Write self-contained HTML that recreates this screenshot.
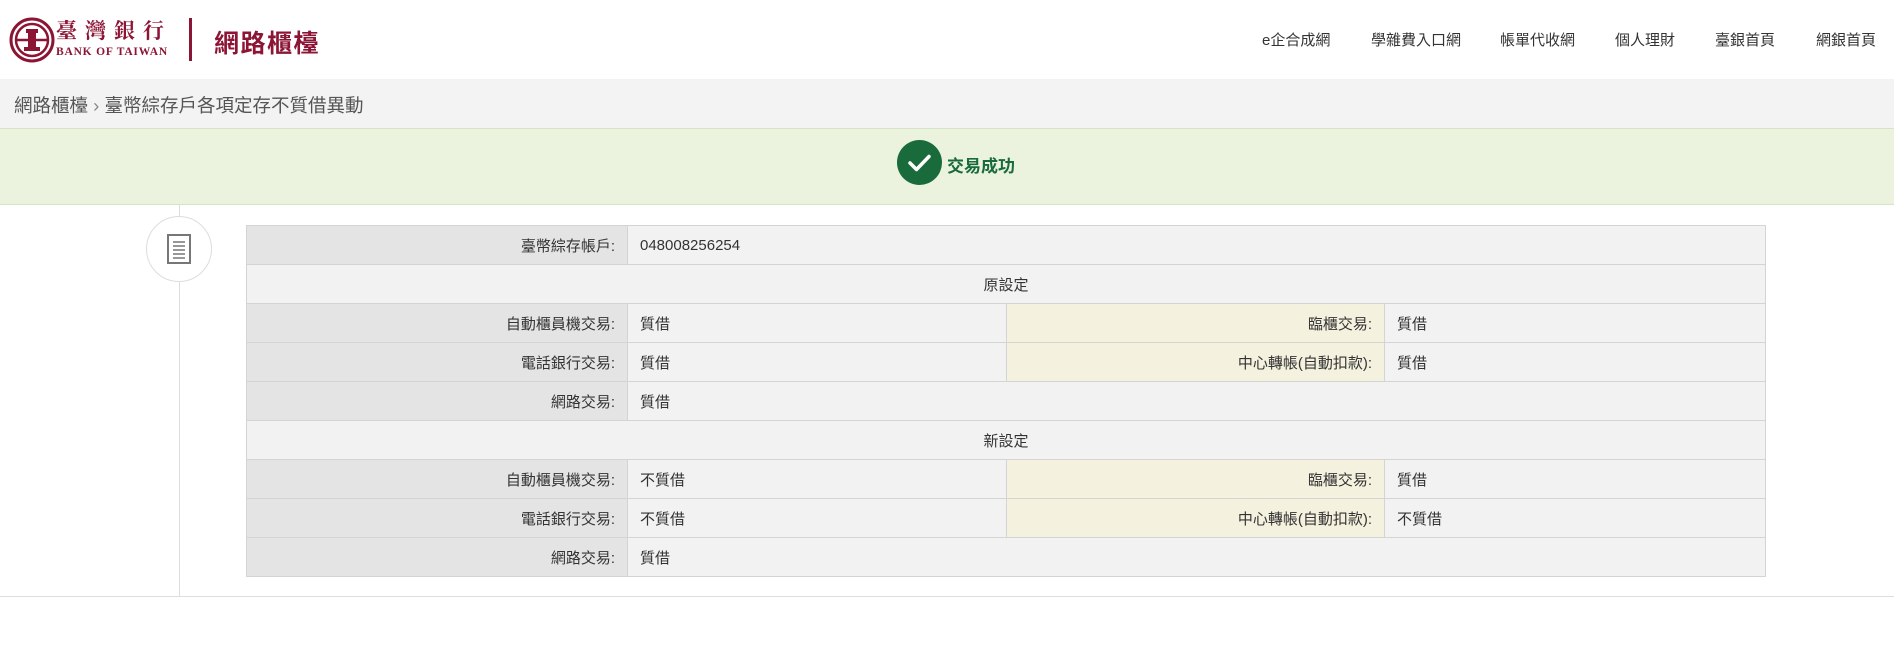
<!DOCTYPE html>
<html><head><meta charset="utf-8"><style>
*{margin:0;padding:0;box-sizing:border-box}
body{width:1894px;height:668px;background:#fff;font-family:"Liberation Sans","Noto Sans CJK TC",sans-serif;color:#333;position:relative;overflow:hidden}
.abs{position:absolute}
.nav{top:29px;font-size:15px;color:#333;white-space:nowrap}
table{position:absolute;left:246px;top:225px;width:1519px;border-collapse:collapse;font-size:15px;table-layout:fixed}
td{height:39px;border:1px solid #d4d4d4;padding:0 12px;background:#f2f2f2}
td.l{background:#e4e4e4;text-align:right}
td.l2{background:#f4f1df;text-align:right}
td.h{text-align:center}
</style></head><body>
<svg class="abs" style="left:9px;top:17px" width="48" height="48" viewBox="0 0 48 48">
<circle cx="23" cy="23" r="21" fill="none" stroke="#8c1535" stroke-width="3"/>
<circle cx="23" cy="23" r="16" fill="none" stroke="#8c1535" stroke-width="2.5"/>
<path d="M7 23h32" stroke="#8c1535" stroke-width="2.5"/>
<path d="M17 12h12v4h-2v14h4v4H15v-4h4V16h-2z" fill="#8c1535"/>
</svg>
<div class="abs" style="left:56px;top:15px;font-family:'Noto Serif CJK SC',serif;font-size:21px;letter-spacing:8px;color:#8c1535;font-weight:bold">臺灣銀行</div>
<div class="abs" style="left:56px;top:46px;font-family:'Liberation Serif',serif;font-size:11.5px;font-weight:bold;color:#8c1535;letter-spacing:0.8px">BANK OF TAIWAN</div>
<div class="abs" style="left:189px;top:18px;width:3px;height:43px;background:#8c1535"></div>
<div class="abs" style="left:214px;top:24px;font-size:25px;font-weight:bold;color:#8c1535;letter-spacing:1.5px">網路櫃檯</div>
<div class="abs nav" style="left:1262px">e企合成網</div>
<div class="abs nav" style="left:1371px">學雜費入口網</div>
<div class="abs nav" style="left:1500px">帳單代收網</div>
<div class="abs nav" style="left:1615px">個人理財</div>
<div class="abs nav" style="left:1715px">臺銀首頁</div>
<div class="abs nav" style="left:1816px">網銀首頁</div>
<div class="abs" style="left:0;top:79px;width:1894px;height:49px;background:#f3f3f3"></div>
<div class="abs" style="left:14px;top:92px;font-size:18.5px;color:#555">網路櫃檯 <span style="color:#888">›</span> 臺幣綜存戶各項定存不質借異動</div>
<div class="abs" style="left:0;top:128px;width:1894px;height:77px;background:#ebf3df;border-top:1px solid #d6e4c6;border-bottom:1px solid #d6e4c6"></div>
<svg class="abs" style="left:897px;top:140px" width="45" height="45" viewBox="0 0 45 45"><circle cx="22.5" cy="22.5" r="22.5" fill="#1a6b3c"/><path d="M13 23l6.5 6.5L32 16.5" fill="none" stroke="#fff" stroke-width="3.5" stroke-linecap="round" stroke-linejoin="round"/></svg>
<div class="abs" style="left:947px;top:152px;font-size:17px;font-weight:bold;color:#1a6b3c">交易成功</div>
<div class="abs" style="left:179px;top:205px;width:1px;height:392px;background:#ddd"></div>
<div class="abs" style="left:0;top:596px;width:1894px;height:1px;background:#ddd"></div>
<div class="abs" style="left:146px;top:216px;width:66px;height:66px;border:1px solid #ddd;border-radius:50%;background:#fff"></div>
<svg class="abs" style="left:167px;top:234px" width="24" height="30" viewBox="0 0 24 30"><rect x="1" y="1" width="22" height="28" fill="#fff" stroke="#777" stroke-width="2"/><path d="M6 8h12M6 12h12M6 16h12M6 20h12M6 24h12" stroke="#777" stroke-width="1.5"/></svg>
<table>
<colgroup><col style="width:381px"><col style="width:379px"><col style="width:378px"><col style="width:381px"></colgroup>
<tr><td class="l">臺幣綜存帳戶:</td><td colspan="3">048008256254</td></tr>
<tr><td class="h" colspan="4">原設定</td></tr>
<tr><td class="l">自動櫃員機交易:</td><td>質借</td><td class="l2">臨櫃交易:</td><td>質借</td></tr>
<tr><td class="l">電話銀行交易:</td><td>質借</td><td class="l2">中心轉帳(自動扣款):</td><td>質借</td></tr>
<tr><td class="l">網路交易:</td><td colspan="3">質借</td></tr>
<tr><td class="h" colspan="4">新設定</td></tr>
<tr><td class="l">自動櫃員機交易:</td><td>不質借</td><td class="l2">臨櫃交易:</td><td>質借</td></tr>
<tr><td class="l">電話銀行交易:</td><td>不質借</td><td class="l2">中心轉帳(自動扣款):</td><td>不質借</td></tr>
<tr><td class="l">網路交易:</td><td colspan="3">質借</td></tr>
</table>
</body></html>
